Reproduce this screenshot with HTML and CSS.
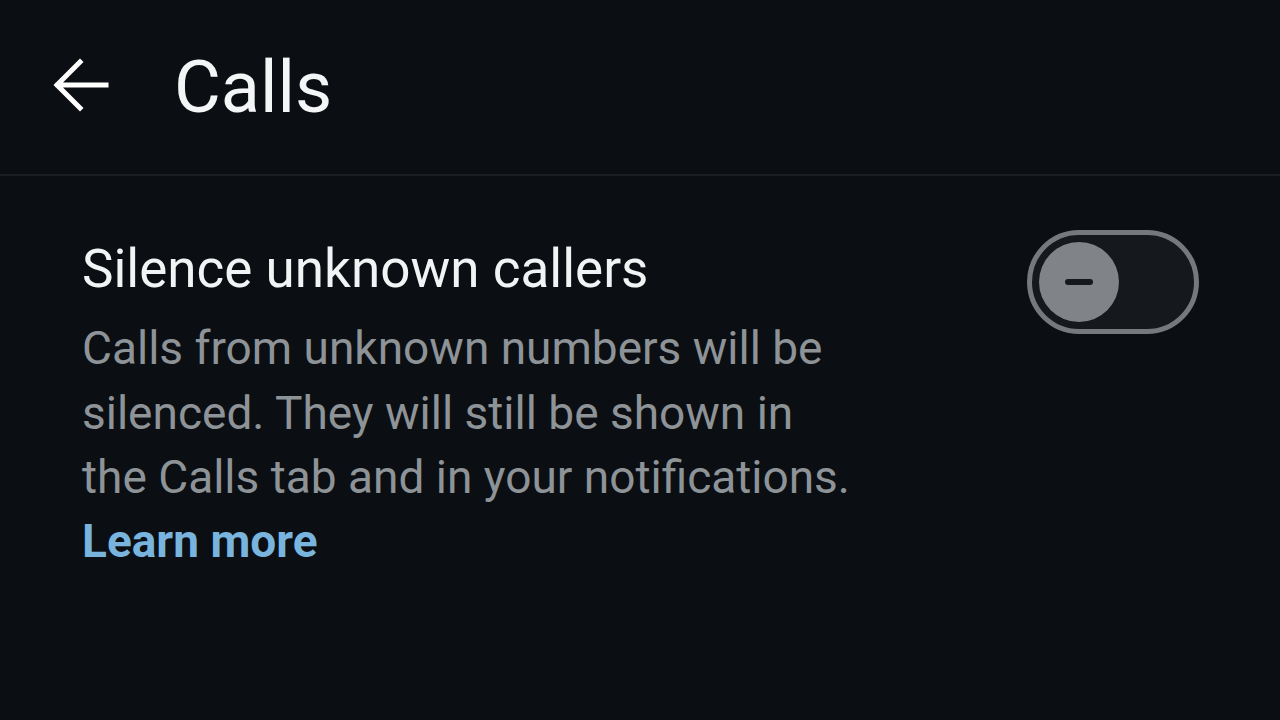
FILE: index.html
```html
<!DOCTYPE html>
<html lang="en">
<head>
    <meta charset="UTF-8">
    <meta name="viewport" content="width=device-width, initial-scale=1.0">
    <title>Calls</title>
    <link rel="stylesheet" href="styles.css">
</head>
<body>

    <!-- Top bar -->
    <header class="topbar">
        <button class="back" aria-label="Back">
            <svg width="58" height="54" viewBox="0 0 58 54">
                <path d="M54 27 H6 M28 4 L5 27 L28 50" fill="none" stroke="#ffffff" stroke-width="5" stroke-linecap="square" stroke-linejoin="miter"/>
            </svg>
        </button>
        <h1 class="title">Calls</h1>
    </header>

    <!-- Setting row -->
    <section class="setting">
        <div class="setting-text">
            <h2 class="setting-title">Silence unknown callers</h2>
            <p class="setting-desc">Calls from unknown numbers will be<br>silenced. They will still be shown in<br>the Calls tab and in your notifications.</p>
            <a class="learn" href="#">Learn more</a>
        </div>
        <div class="switch">
            <span class="knob"><span class="dash"></span></span>
        </div>
    </section>

</body>
</html>
```

FILE: styles.css
```css
* {
    margin: 0;
    padding: 0;
    box-sizing: border-box;
    font-family: Roboto, 'Noto Sans', sans-serif;
}
body {
    background: #0b0f13;
    color: white;
    width: 1280px;
    height: 720px;
    overflow: hidden;
}
.topbar {
    display: flex;
    align-items: center;
    height: 176px;
    padding-left: 52px;
    border-bottom: 2px solid #1a1e23;
}
.back {
    background: none;
    border: none;
    width: 58px;
    height: 54px;
    margin-right: 64px;
    margin-top: -4px;
}
.back svg {
    display: block;
}
.title {
    font-size: 72px;
    font-weight: 400;
    color: #f4f5f6;
    margin-top: 0;
}
.setting {
    display: flex;
    justify-content: space-between;
    align-items: flex-start;
    padding: 61px 82px 0 82px;
}
.setting-title {
    font-size: 53px;
    font-weight: 400;
    color: #f2f3f4;
    line-height: 64px;
    margin-bottom: 15px;
}
.setting-desc {
    font-size: 46px;
    color: #8e9398;
    line-height: 64.5px;
}
.learn {
    display: block;
    font-size: 46px;
    font-weight: 700;
    color: #78b4de;
    text-decoration: none;
    line-height: 63px;
}
.switch {
    width: 172px;
    height: 104px;
    margin-top: -7px;
    margin-right: -1px;
    border: 5px solid #75797d;
    border-radius: 52px;
    background: #15191d;
    display: flex;
    align-items: center;
    padding-left: 7px;
}
.knob {
    width: 80px;
    height: 80px;
    border-radius: 50%;
    background: #808488;
    display: flex;
    align-items: center;
    justify-content: center;
}
.dash {
    width: 28px;
    height: 6px;
    border-radius: 3px;
    background: #15191d;
}
```
